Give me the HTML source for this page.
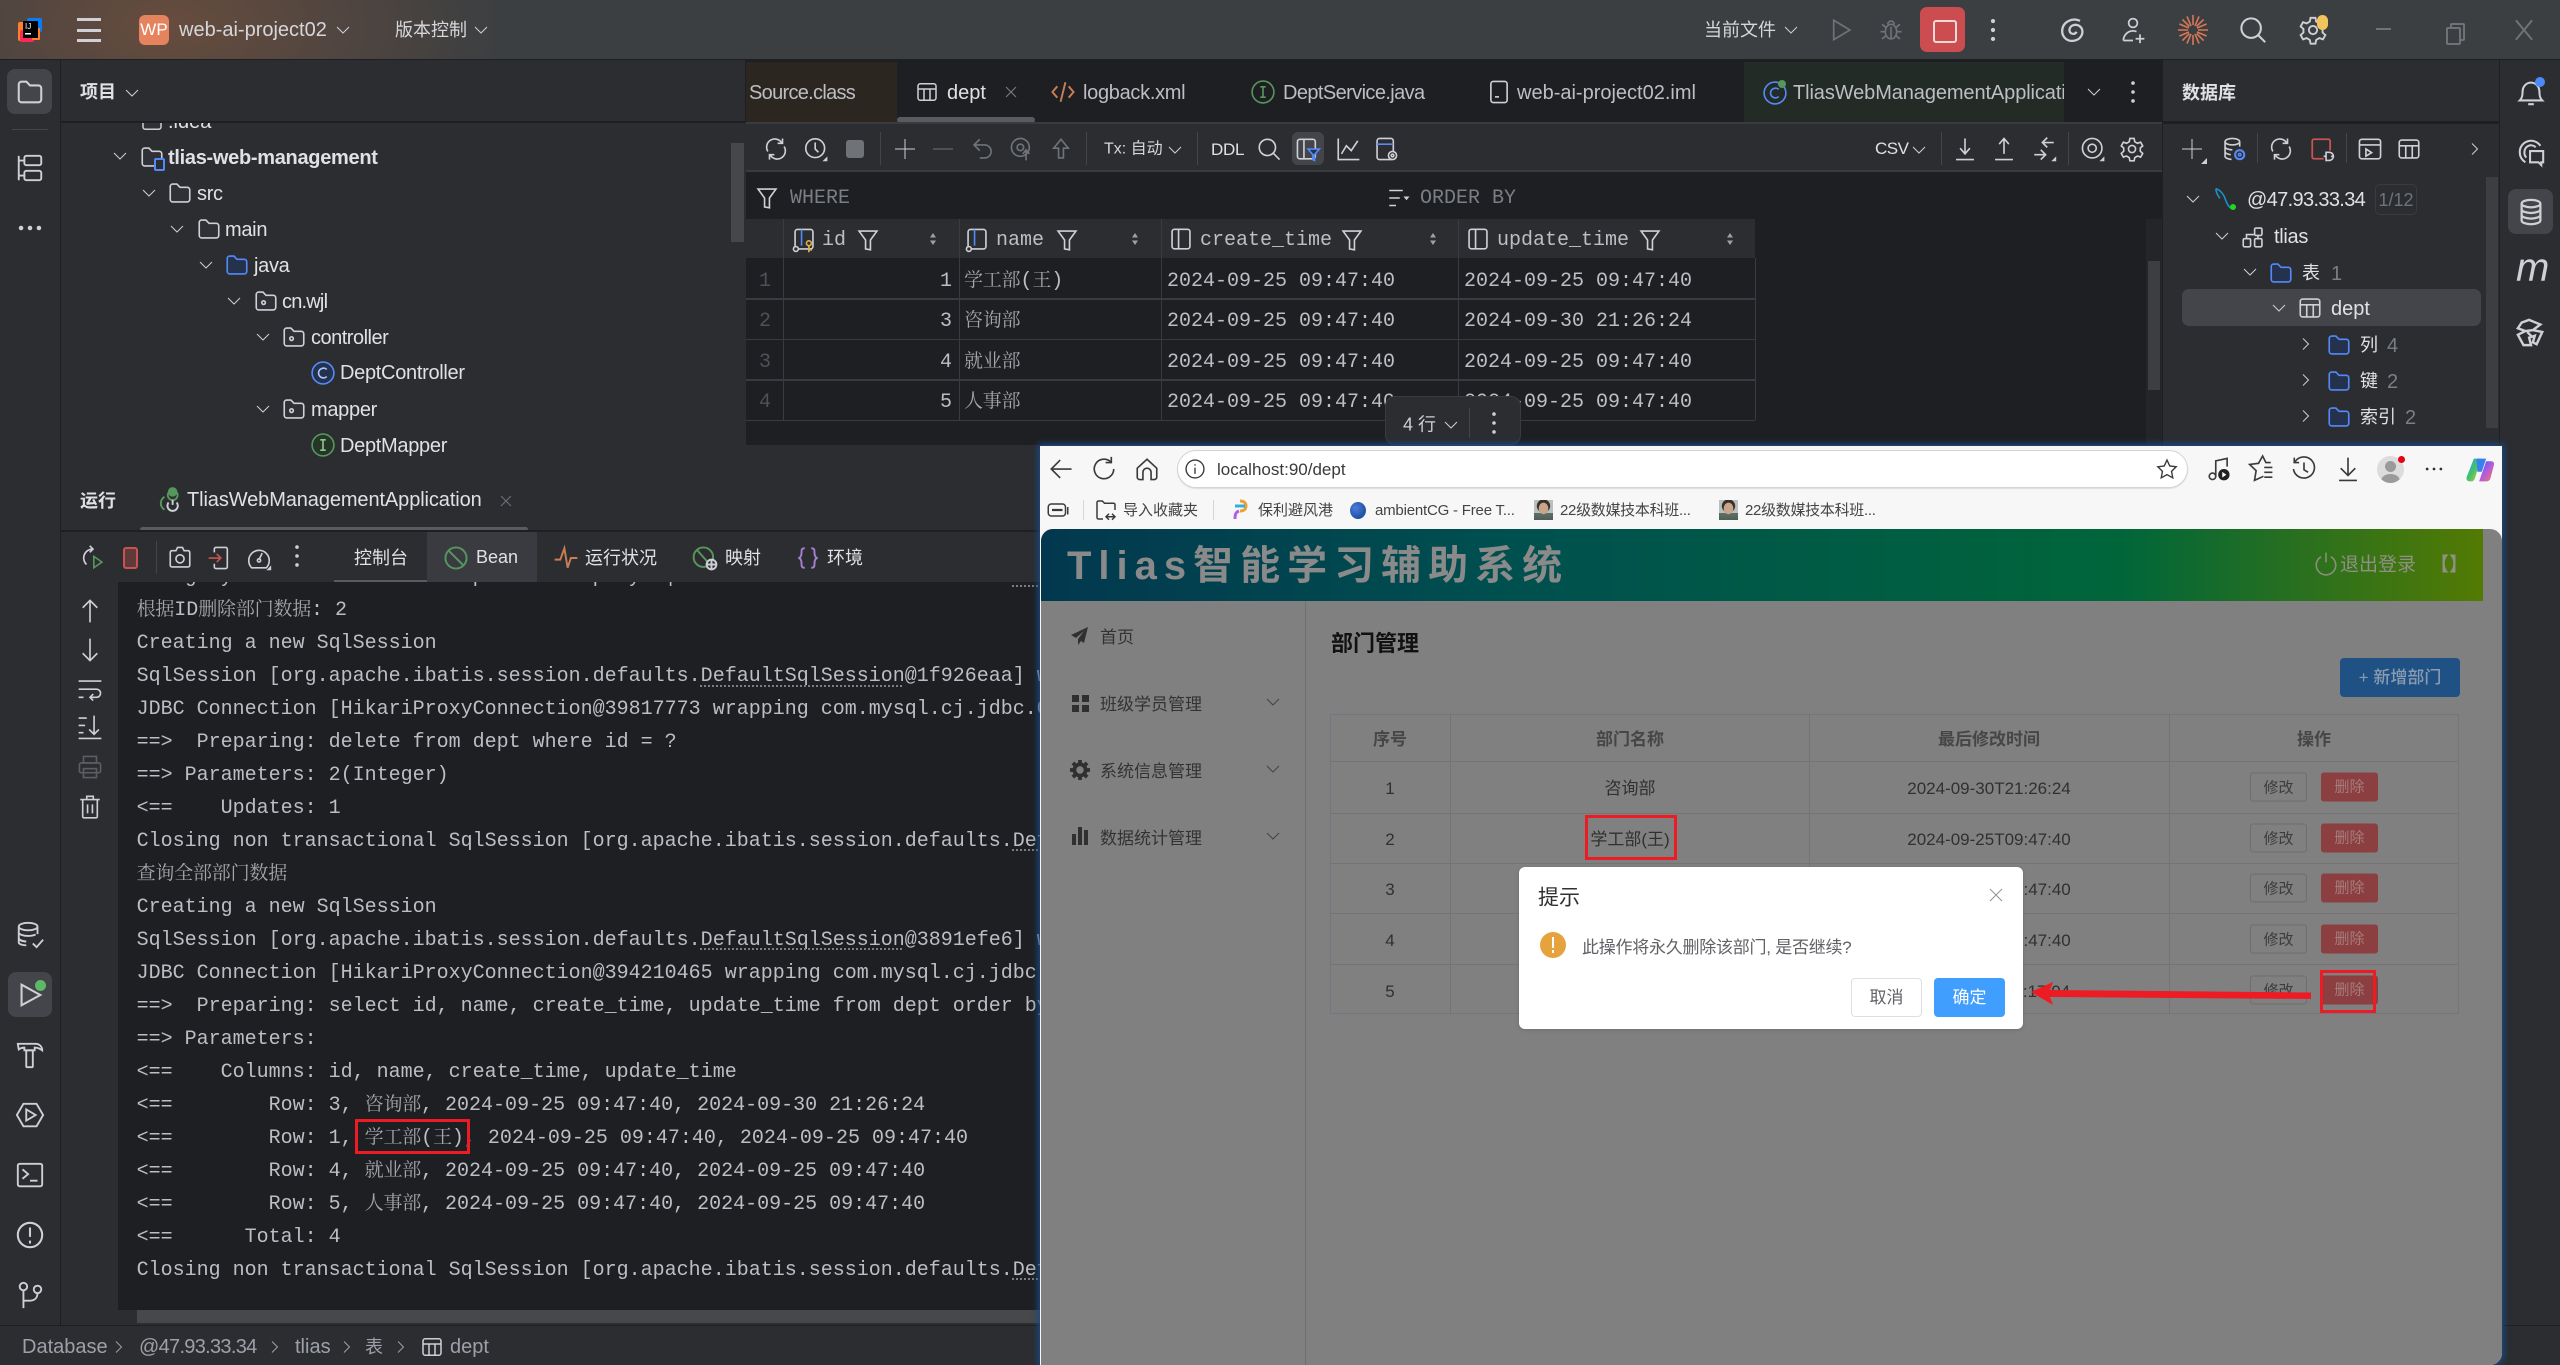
<!DOCTYPE html>
<html lang="zh"><head><meta charset="utf-8"><title>web-ai-project02</title>
<style>
html,body{margin:0;padding:0}
body{width:2560px;height:1365px;overflow:hidden;background:#2b2d30;font-family:"Liberation Sans","Noto Sans CJK SC",sans-serif;position:relative}
.a{position:absolute}
.t{position:absolute;white-space:nowrap;line-height:1.2;transform:translateY(-50%);font-size:20px;color:#dfe1e5}
.z{font-size:18px;font-family:"Noto Sans CJK SC","Liberation Sans",sans-serif}
.b{font-weight:700}
.g{color:#7a7e85}
.q{letter-spacing:-.3px}
.m{font-family:"Liberation Mono","Noto Serif CJK SC",monospace}
.ct{transform:translate(-50%,-50%)}
svg.i{position:absolute;width:26px;height:26px;transform:translate(-50%,-50%);fill:none;stroke:#ced0d6;stroke-width:1;overflow:visible}
svg.s{width:16px;height:16px}
svg.fg{fill:#2f3136}
svg.fb{fill:#25324d;stroke:#548af7}
svg.d{stroke:#6f737a}
svg.k{stroke:#3a3a3a}
.l{height:33px;line-height:33px;white-space:pre;font:20px/33px "Liberation Mono","Noto Serif CJK SC",monospace;color:#bcbec4}
.c{font-family:"Noto Serif CJK SC",serif;font-size:19px;letter-spacing:-.2px;color:#a4a6ab;line-height:0}
.dot{position:absolute;border-top:2px dotted #7a7e85;height:0}
.hd{font:20px/24px "Liberation Mono",monospace;color:#bcbec4;margin-top:1.500px}
.n{font:20px/24px "Liberation Mono",monospace;color:#4e5157;margin-top:1.500px}
.d1{font:20px/24px "Liberation Mono",monospace;color:#bcbec4;margin-top:1.500px}
.cj{font-family:"Noto Serif CJK SC",serif;font-size:19px;letter-spacing:-.2px;color:#a4a6ab;line-height:0}
.vl{position:absolute;width:1px;background:#393b40}
.hl{position:absolute;background:#393b40}
.w{font-size:17px;color:#303030;margin-top:1.500px}
.wh{font-size:17px;color:#464646;font-weight:700;margin-top:1.500px}
.bt1{position:absolute;left:2250px;width:57px;height:29px;box-sizing:border-box;border:1px solid #6e6e6e;border-radius:3px;color:#3c3c3c;font-size:15px;line-height:29px;text-align:center;transform:translateY(-50%)}
.bt2{position:absolute;left:2321px;width:57px;height:29px;border-radius:3px;background:#8b3f40;color:#a57d7d;font-size:15px;line-height:30px;text-align:center;transform:translateY(-50%)}
.rb{position:absolute;box-sizing:border-box;border:3px solid #ed1c24}
.h{position:absolute;width:1px;height:36px;background:#43454a;transform:translateY(-50%)}
.ava{position:absolute;width:19px;height:20px;background:radial-gradient(ellipse 5px 6px at 50% 42%,#c9a58a 0,#c9a58a 90%,transparent 100%),radial-gradient(ellipse 7px 7px at 50% 30%,#3a3029 0,#3a3029 90%,transparent 100%),linear-gradient(180deg,#b9c0c0 0,#b9c0c0 65%,#5d6f66 66%,#4f5f58 100%)}
</style></head><body>
<svg width="0" height="0" style="position:absolute">
<symbol id="cd" viewBox="0 0 16 16"><path d="M2 5l6 6 6-6"/></symbol>
<symbol id="cr" viewBox="0 0 16 16"><path d="M5 2.500L10.500 8 5 13.500"/></symbol>
<symbol id="fo" viewBox="0 0 16 16"><path d="M2 4a1.500 1.500 0 0 1 1.500-1.500h2.600L8 4.500h4.500A1.500 1.500 0 0 1 14 6v6a1.500 1.500 0 0 1-1.500 1.500h-9A1.500 1.500 0 0 1 2 12z"/></symbol>
<symbol id="pk" viewBox="0 0 16 16"><path d="M2 4a1.500 1.500 0 0 1 1.500-1.500h2.600L8 4.500h4.500A1.500 1.500 0 0 1 14 6v6a1.500 1.500 0 0 1-1.500 1.500h-9A1.500 1.500 0 0 1 2 12z"/><circle cx="6.500" cy="9" r="1.100"/></symbol>
<symbol id="col" viewBox="0 0 16 16"><rect x="2.500" y="2" width="11" height="12" rx="1.500"/><path d="M6.500 2v12"/></symbol>
<symbol id="tb" viewBox="0 0 16 16"><rect x="2" y="2.500" width="12" height="11" rx="1.500"/><path d="M2 6h12M6 6v7.500M10 6v7.500"/></symbol>
<symbol id="fl" viewBox="0 0 16 16"><path d="M2.500 2.500h11L9.500 8v6l-3-.5V8z"/></symbol>
<symbol id="so" viewBox="0 0 16 16"><path d="M8 2l3 4.500H5zM8 14l3-4.500H5z" fill="#9da0a8" stroke="none"/></symbol>
<symbol id="ref" viewBox="0 0 16 16"><path d="M3 9.500A5 5 0 0 1 11.500 4.200M13 6.500A5 5 0 0 1 4.500 11.800M12 1.500v3H9M4 14.500v-3h3"/></symbol>
<symbol id="gear" viewBox="0 0 16 16"><path d="M6.700 1.500h2.600l.4 2 1.700 1 1.900-.7 1.300 2.300-1.500 1.300v2l1.500 1.300-1.300 2.300-1.900-.7-1.700 1-.4 2H6.700l-.4-2-1.700-1-1.900.7-1.300-2.300 1.500-1.300v-2L1.400 6.100l1.300-2.300 1.900.7 1.700-1z"/><circle cx="8" cy="8" r="2.200"/></symbol>
<symbol id="db" viewBox="0 0 16 16"><ellipse cx="8" cy="3.500" rx="5" ry="2"/><path d="M3 3.500v9c0 1.100 2.200 2 5 2s5-.9 5-2v-9M3 6.500c0 1.100 2.200 2 5 2s5-.9 5-2M3 9.500c0 1.100 2.200 2 5 2s5-.9 5-2"/></symbol>
</svg>

<!-- title bar -->
<div class="a" style="left:0;top:0;width:2560px;height:60px;background:radial-gradient(ellipse 330px 170px at 170px 25px,#674c3e 0,rgba(103,76,62,.55) 45%,rgba(103,76,62,0) 100%),#3c3f41;border-bottom:1px solid #1e1f22;box-sizing:border-box"></div>
<svg class="a" style="left:18px;top:18px;width:24px;height:24px" viewBox="0 0 24 24"><rect x="9" y="0" width="15" height="14" rx="2" fill="#087cfa"/><rect x="0" y="4" width="10" height="19" rx="2" fill="#fe7f2d"/><rect x="2" y="12" width="14" height="12" rx="2" fill="#fe2857"/><rect x="14" y="10" width="8" height="12" rx="1" fill="#fe7f2d"/><rect x="5" y="3" width="15" height="17" fill="#000"/><text x="7" y="11" font-size="8" fill="#fff" font-family="Liberation Sans">IJ</text><rect x="7" y="15" width="6" height="1.500" fill="#fff"/></svg>
<div class="a" style="left:77px;top:18px;width:24px;height:3px;background:#cfd1d6"></div><div class="a" style="left:77px;top:29px;width:24px;height:3px;background:#cfd1d6"></div><div class="a" style="left:77px;top:39px;width:24px;height:3px;background:#cfd1d6"></div>
<div class="a" style="left:139px;top:15px;width:30px;height:30px;background:#e5835f;border-radius:6px;color:#fff;font-size:17px;line-height:30px;text-align:center">WP</div>
<div class="t" style="left:179px;top:30px;color:#d5d7dc">web-ai-project02</div>
<svg class="i s" style="left:343px;top:30px"><use href="#cd"/></svg>
<div class="t z" style="left:395px;top:30px;color:#d5d7dc">版本控制</div>
<svg class="i s" style="left:481px;top:30px"><use href="#cd"/></svg>
<div class="t z" style="left:1704px;top:30px;color:#d5d7dc">当前文件</div>
<svg class="i s" style="left:1791px;top:30px"><use href="#cd"/></svg>
<svg class="i d" style="left:1841px;top:30px" viewBox="0 0 16 16"><path d="M3.500 2l10 6-10 6z"/></svg>
<svg class="i d" style="left:1891px;top:30px" viewBox="0 0 16 16"><ellipse cx="8" cy="9" rx="3.500" ry="4.500"/><path d="M6 4.500a2 2 0 0 1 4 0M1.500 9h3M11.500 9h3M2.500 4.500l2.500 2M13.500 4.500L11 6.500M2.500 13.500l2.500-2M13.500 13.500L11 11.500M8 6v7"/></svg>
<div class="a" style="left:1920px;top:7px;width:45px;height:45px;background:#cc4d4f;border-radius:7px"></div>
<div class="a" style="left:1933px;top:20px;width:20px;height:19px;border:2px solid #f3d8d8;border-radius:3px"></div>
<svg class="i" style="left:1993px;top:30px" viewBox="0 0 16 16"><g fill="#ced0d6" stroke="none"><circle cx="8" cy="2.500" r="1.300"/><circle cx="8" cy="8" r="1.300"/><circle cx="8" cy="13.500" r="1.300"/></g></svg>
<svg class="i" style="left:2073px;top:30px;width:28px;height:28px;stroke-width:1.300" viewBox="0 0 16 16"><path d="M12 2.800C8 .8 2 3 1.800 8.500c0 3.800 3 6 6.200 5.700 3.800-.3 5.800-3.300 5.300-6-.5-2.500-3-3.700-5.300-2.900-2 .7-2.600 3-1.400 4.300 1 1 2.800.8 3.400-.6"/></svg>
<svg class="i" style="left:2133px;top:30px;width:28px;height:28px" viewBox="0 0 16 16"><circle cx="8" cy="4" r="2.500"/><path d="M2.500 14c0-3 2.500-5.500 5.500-5.500 1 0 1.500.2 2 .4M2.500 14H8M12 10.500v5M9.500 13h5"/></svg>
<svg class="i" style="left:2193px;top:30px;width:32px;height:32px;stroke:#d97757;stroke-width:.8" viewBox="0 0 16 16"><path d="M8 .5v5M8 10.500v5M.5 8h5M10.500 8h5M2.700 2.700l3.500 3.500M9.800 9.800l3.500 3.500M13.300 2.700L9.800 6.200M6.200 9.800l-3.500 3.500M5 1.200l2 4.800M9 10l2 4.800M11 1.200L9 6M7 10l-2 4.800M1.200 5L6 7M10 9l4.800 2M14.800 5L10 7M6 9l-4.800 2"/></svg>
<svg class="i" style="left:2253px;top:30px;width:30px;height:30px;stroke-width:1.100" viewBox="0 0 16 16"><circle cx="7" cy="7" r="5.200"/><path d="M10.800 10.800L14.500 14.500"/></svg>
<svg class="i" style="left:2313px;top:30px;width:30px;height:30px"><use href="#gear"/></svg>
<div class="a" style="left:2317px;top:15px;width:11px;height:15px;border-radius:6px;background:#f2c55c"></div>
<div class="a" style="left:2376px;top:28px;width:15px;height:2px;background:#6f7277"></div>
<div class="a" style="left:2450px;top:23px;width:11px;height:14px;border:2px solid #6f7277;border-radius:2px"></div>
<div class="a" style="left:2446px;top:27px;width:11px;height:14px;border:2px solid #6f7277;border-radius:2px;background:#3c3f41"></div>
<svg class="i" style="left:2524px;top:30px;stroke:#6f7277;stroke-width:1.200" viewBox="0 0 16 16"><path d="M3 2l10 12M13 2L3 14"/></svg>

<!-- left stripe -->
<div class="a" style="left:0;top:60px;width:61px;height:1266px;background:#2b2d30;border-right:1px solid #1e1f22;box-sizing:border-box"></div>
<div class="a" style="left:7px;top:69px;width:45px;height:45px;background:#43454a;border-radius:8px"></div>
<svg class="i" style="left:30px;top:92px;width:30px;height:30px;stroke-width:1.100"><use href="#fo"/></svg>
<div class="a" style="left:12px;top:129px;width:36px;height:1px;background:#43454a"></div>
<svg class="i" style="left:30px;top:168px;width:30px;height:30px" viewBox="0 0 16 16"><path d="M2 1.500v13M2 4h3M2 12h3"/><rect x="5" y="1.500" width="9" height="5" rx="1"/><rect x="5" y="9.500" width="9" height="5" rx="1"/></svg>
<svg class="i" style="left:30px;top:228px" viewBox="0 0 16 16"><g fill="#ced0d6" stroke="none"><circle cx="2.500" cy="8" r="1.400"/><circle cx="8" cy="8" r="1.400"/><circle cx="13.500" cy="8" r="1.400"/></g></svg>
<svg class="i" style="left:30px;top:935px;width:30px;height:30px" viewBox="0 0 16 16"><ellipse cx="7" cy="3.500" rx="5" ry="2"/><path d="M2 3.500v8.500c0 .8 2 1.500 4 1.500M12 3.500v4M2 6.500c0 1.100 2.200 2 5 2 1.500 0 3-.3 4-.8M2 9.500c0 1 1.500 1.800 4 2M9.500 12.500l2 2 3.500-4"/></svg>
<div class="a" style="left:8px;top:972px;width:44px;height:45px;background:#43454a;border-radius:8px"></div>
<svg class="i" style="left:30px;top:995px;width:30px;height:30px;stroke-width:1.100" viewBox="0 0 16 16"><path d="M3.500 2.500l10 5.500-10 5.500z"/></svg>
<div class="a" style="left:35px;top:980px;width:11px;height:11px;border-radius:50%;background:#5fb865"></div>
<svg class="i" style="left:30px;top:1055px;width:30px;height:30px" viewBox="0 0 16 16"><path d="M1.500 2h9.500c2 0 3.500 1.500 3.500 3.500-1.500-1.200-3-1.500-4-1.500v1.500H5V4c-1 0-2 .3-3 1z"/><rect x="6" y="5.500" width="3.500" height="9" rx=".5"/></svg>
<svg class="i" style="left:30px;top:1115px;width:30px;height:30px" viewBox="0 0 16 16"><path d="M1 8l3.500-6h7L15 8l-3.500 6h-7z"/><path d="M6 5l5 3-5 3z"/></svg>
<svg class="i" style="left:30px;top:1175px;width:30px;height:30px" viewBox="0 0 16 16"><rect x="1.500" y="2" width="13" height="12" rx="1"/><path d="M4 5l3 2.500L4 10M8 11h4"/></svg>
<svg class="i" style="left:30px;top:1235px;width:30px;height:30px;stroke-width:1.100" viewBox="0 0 16 16"><circle cx="8" cy="8" r="6.500"/><path d="M8 4v5M8 11v1.500"/></svg>
<svg class="i" style="left:30px;top:1295px;width:30px;height:30px" viewBox="0 0 16 16"><circle cx="4.500" cy="3.500" r="2"/><circle cx="12" cy="5" r="2"/><path d="M4.500 5.500V15M4.500 11H8c2.500 0 4-1.500 4-4"/></svg>

<!-- project panel -->
<div class="a" style="left:61px;top:60px;width:684px;height:408px;background:#2b2d30"></div>
<div class="a" style="left:61px;top:121px;width:684px;height:2px;background:#1e1f22"></div>
<div class="t z b" style="left:80px;top:92px">项目</div>
<svg class="i s" style="left:132px;top:93px"><use href="#cd"/></svg>
<div class="a" style="left:61px;top:123px;width:684px;height:345px;overflow:hidden">
<div class="t" style="left:107px;top:-1px">.idea</div>
<svg class="i fg" style="left:91px;top:-2px;width:24px;height:24px"><use href="#fo"/></svg>
</div>
<svg class="i s" style="left:120px;top:156px"><use href="#cd"/></svg>
<svg class="i fg" style="left:152px;top:157px"><use href="#fo"/></svg>
<div class="a" style="left:154px;top:158px;width:7px;height:9px;border:2px solid #548af7;border-radius:2px;background:#2b2d30"></div>
<div class="t b q" style="left:168px;top:158px">tlias-web-management</div>
<svg class="i s" style="left:149px;top:193px"><use href="#cd"/></svg>
<svg class="i fg" style="left:180px;top:193px"><use href="#fo"/></svg>
<div class="t q" style="left:197px;top:194px">src</div>
<svg class="i s" style="left:177px;top:229px"><use href="#cd"/></svg>
<svg class="i fg" style="left:209px;top:229px"><use href="#fo"/></svg>
<div class="t q" style="left:225px;top:230px">main</div>
<svg class="i s" style="left:206px;top:265px"><use href="#cd"/></svg>
<svg class="i fb" style="left:237px;top:265px"><use href="#fo"/></svg>
<div class="t q" style="left:254px;top:266px">java</div>
<svg class="i s" style="left:234px;top:301px"><use href="#cd"/></svg>
<svg class="i fg" style="left:266px;top:301px"><use href="#pk"/></svg>
<div class="t" style="left:282px;top:302px;letter-spacing:-.8px">cn.wjl</div>
<svg class="i s" style="left:263px;top:337px"><use href="#cd"/></svg>
<svg class="i fg" style="left:294px;top:337px"><use href="#pk"/></svg>
<div class="t" style="left:311px;top:338px;letter-spacing:-.5px">controller</div>
<svg class="i" style="left:323px;top:373px;stroke:#548af7;fill:#25324d" viewBox="0 0 16 16"><circle cx="8" cy="8" r="6.700"/><path d="M10.300 5.800a3 3 0 1 0 0 4.400" stroke="#a8c4fa" fill="none"/></svg>
<div class="t q" style="left:340px;top:373px">DeptController</div>
<svg class="i s" style="left:263px;top:409px"><use href="#cd"/></svg>
<svg class="i fg" style="left:294px;top:409px"><use href="#pk"/></svg>
<div class="t q" style="left:311px;top:410px">mapper</div>
<svg class="i" style="left:323px;top:445px;stroke:#57965c;fill:#253627" viewBox="0 0 16 16"><circle cx="8" cy="8" r="6.700"/><path d="M6.300 4.800h3.400M8 4.800v6.400M6.300 11.200h3.400" stroke="#8ec593" fill="none"/></svg>
<div class="t q" style="left:340px;top:446px">DeptMapper</div>
<div class="a" style="left:731px;top:143px;width:13px;height:99px;background:#45474b"></div>
<div class="a" style="left:61px;top:468px;width:684px;height:1px;background:#1e1f22"></div>

<!-- editor -->
<div class="a" style="left:745px;top:60px;width:1417px;height:62px;background:#1e1f22;border-left:1px solid #1e1f22;box-sizing:border-box"></div>
<div class="a" style="left:746px;top:62px;width:151px;height:60px;background:#2c2620;overflow:hidden"><div class="t" style="left:3px;top:31px;color:#bcbec4;letter-spacing:-.7px">Source.class</div></div>
<svg class="i" style="left:927px;top:92px;width:24px;height:24px"><use href="#tb"/></svg>
<div class="t" style="left:947px;top:93px">dept</div>
<svg class="i s" style="left:1011px;top:92px;stroke:#7a7e85" viewBox="0 0 16 16"><path d="M3 3l10 10M13 3L3 13"/></svg>
<div class="a" style="left:897px;top:117px;width:138px;height:6px;background:#595b61;border-radius:3px"></div>
<svg class="i" style="left:1063px;top:92px;stroke:#c77d55;stroke-width:1.200" viewBox="0 0 16 16"><path d="M4.500 4.500L1.500 8l3 3.500M11.500 4.500l3 3.500-3 3.500" /><path d="M9.500 2l-3 12"/></svg>
<div class="t" style="left:1083px;top:93px;color:#bcbec4;letter-spacing:-.3px">logback.xml</div>
<svg class="i" style="left:1263px;top:92px;stroke:#57965c" viewBox="0 0 16 16"><circle cx="8" cy="8" r="6.700"/><path d="M6.300 4.800h3.400M8 4.800v6.400M6.300 11.200h3.400"/></svg>
<div class="t" style="left:1283px;top:93px;color:#bcbec4;letter-spacing:-.6px">DeptService.java</div>
<svg class="i" style="left:1499px;top:92px" viewBox="0 0 16 16"><rect x="3" y="1.500" width="10" height="13" rx="1.500"/><path d="M5.500 11h2.500"/></svg>
<div class="t" style="left:1517px;top:93px;color:#bcbec4">web-ai-project02.iml</div>
<div class="a" style="left:1744px;top:62px;width:320px;height:60px;background:#222b26;overflow:hidden"><div class="t" style="left:49px;top:31px;color:#bcbec4;letter-spacing:-.1px">TliasWebManagementApplication</div></div>
<svg class="i" style="left:1775px;top:93px;stroke:#548af7" viewBox="0 0 16 16"><circle cx="8" cy="8" r="6.700"/><path d="M10.300 5.800a3 3 0 1 0 0 4.400"/></svg>
<div class="a" style="left:1778px;top:80px;width:8px;height:8px;border-radius:50%;background:#57965c"></div>
<svg class="i s" style="left:2094px;top:92px"><use href="#cd"/></svg>
<svg class="i" style="left:2133px;top:92px" viewBox="0 0 16 16"><g fill="#ced0d6" stroke="none"><circle cx="8" cy="2.500" r="1.100"/><circle cx="8" cy="8" r="1.100"/><circle cx="8" cy="13.500" r="1.100"/></g></svg>

<div class="a" style="left:746px;top:122px;width:1416px;height:50px;background:#2b2d30;border-top:2px solid #393b40;border-bottom:2px solid #393b40;box-sizing:border-box"></div>
<svg class="i" style="left:776px;top:149px"><use href="#ref"/></svg>
<svg class="i" style="left:816px;top:149px" viewBox="0 0 16 16"><circle cx="7.500" cy="7.500" r="5.800"/><path d="M7.500 4v4l2 2"/><path d="M15 12.500v3h-3z" fill="#ced0d6" stroke="none"/></svg>
<div class="a" style="left:846px;top:140px;width:18px;height:18px;border-radius:3px;background:#6f7277"></div>
<div class="vl" style="left:880px;top:132px;height:33px;background:#43454a"></div>
<svg class="i" style="left:905px;top:149px"><path d="M13 3v20M3 13h20"/></svg>
<svg class="i d" style="left:943px;top:149px"><path d="M3 13h20"/></svg>
<svg class="i d" style="left:983px;top:149px" viewBox="0 0 16 16"><path d="M6 2L2.500 5.500 6 9M2.500 5.500H9a4 4 0 0 1 0 8H6"/></svg>
<svg class="i d" style="left:1022px;top:149px" viewBox="0 0 16 16"><circle cx="7" cy="7" r="5.500"/><circle cx="7" cy="7" r="2"/><path d="M10.500 15V9M8.500 11l2-2.500 2 2.500"/></svg>
<svg class="i d" style="left:1061px;top:149px" viewBox="0 0 16 16"><path d="M8 2L3.500 7.500H6.500v6h3v-6h3z"/></svg>
<div class="vl" style="left:1086px;top:132px;height:33px;background:#43454a"></div>
<div class="t" style="left:1104px;top:149px;font-size:16px;color:#d5d7dc">Tx: <span style="font-size:16px">自动</span></div>
<svg class="i s" style="left:1175px;top:150px"><use href="#cd"/></svg>
<div class="vl" style="left:1197px;top:132px;height:33px;background:#43454a"></div>
<div class="t" style="left:1211px;top:150px;font-size:17px;letter-spacing:-.3px">DDL</div>
<svg class="i" style="left:1269px;top:149px" viewBox="0 0 16 16"><circle cx="7" cy="7" r="5"/><path d="M10.500 10.500l4 4"/></svg>
<div class="a" style="left:1292px;top:132px;width:32px;height:33px;background:#43454a;border-radius:6px"></div>
<svg class="i" style="left:1308px;top:149px" viewBox="0 0 16 16"><rect x="1.500" y="2" width="11" height="12" rx="1.500"/><path d="M5.500 2v12"/><path d="M8 8h7l-3 3.500V15l-1-.5v-3z" fill="#25324d" stroke="#548af7"/></svg>
<svg class="i" style="left:1348px;top:149px" viewBox="0 0 16 16"><path d="M2 1.500V14.500H15M4 11l3-5 3 3 4-6"/></svg>
<svg class="i" style="left:1386px;top:149px" viewBox="0 0 16 16"><rect x="2.500" y="1.500" width="10" height="13" rx="1.500"/><path d="M2.500 5h10" stroke="#548af7"/><circle cx="12" cy="12" r="2.500" fill="#2b2d30"/><circle cx="12" cy="12" r=".8"/></svg>
<div class="t" style="left:1875px;top:149px;font-size:17px;letter-spacing:-.5px">CSV</div>
<svg class="i s" style="left:1919px;top:150px"><use href="#cd"/></svg>
<div class="vl" style="left:1941px;top:132px;height:33px;background:#43454a"></div>
<svg class="i" style="left:1965px;top:149px" viewBox="0 0 16 16"><path d="M8 1.500v9M5 7.500l3 3.500 3-3.500M2.500 14.500h11"/></svg>
<svg class="i" style="left:2004px;top:149px" viewBox="0 0 16 16"><path d="M8 11V2M5 5l3-3.500L11 5M2.500 14.500h11"/></svg>
<svg class="i" style="left:2044px;top:149px" viewBox="0 0 16 16"><path d="M14 4H7M10 1L7 4l3 3M2 11.500h7M6 8.500l3 3-3 3"/><path d="M15.500 12.500v3h-3z" fill="#ced0d6" stroke="none"/></svg>
<div class="vl" style="left:2068px;top:132px;height:33px;background:#43454a"></div>
<svg class="i" style="left:2093px;top:149px" viewBox="0 0 16 16"><circle cx="7.500" cy="7.500" r="6"/><circle cx="7.500" cy="7.500" r="2.500"/><path d="M15 12.500v3h-3z" fill="#ced0d6" stroke="none"/></svg>
<svg class="i" style="left:2132px;top:149px"><use href="#gear"/></svg>

<div class="a" style="left:746px;top:172px;width:1416px;height:273px;background:#1e1f22"></div>
<svg class="i d" style="left:767px;top:198px;stroke:#ced0d6"><use href="#fl"/></svg>
<div class="t m g" style="left:790px;top:199px">WHERE</div>
<svg class="i" style="left:1399px;top:198px;width:24px;height:24px" viewBox="0 0 16 16"><path d="M1.500 3h9M1.500 8h7M1.500 13h4.500"/><path d="M11 7h4l-2 2.500z" fill="#ced0d6" stroke="none"/></svg>
<div class="t m g" style="left:1420px;top:199px">ORDER BY</div>

<div class="a" style="left:746px;top:219px;width:1009px;height:39px;background:#2b2d30"></div>
<div class="hl" style="left:746px;top:298px;width:1009px;height:2px"></div>
<div class="hl" style="left:746px;top:339px;width:1009px;height:1px"></div>
<div class="hl" style="left:746px;top:379px;width:1009px;height:2px"></div>
<div class="hl" style="left:746px;top:420px;width:1009px;height:1px"></div>
<div class="vl" style="left:783px;top:219px;height:201px;background:#393b40"></div>
<div class="vl" style="left:959px;top:219px;height:201px;background:#393b40"></div>
<div class="vl" style="left:1161px;top:219px;height:201px;background:#393b40"></div>
<div class="vl" style="left:1458px;top:219px;height:201px;background:#393b40"></div>
<div class="vl" style="left:1755px;top:258px;height:162px;background:#393b40"></div>

<svg class="i" style="left:804px;top:240px" viewBox="0 0 16 16"><rect x="2.500" y="1.500" width="11" height="12" rx="1.500"/><path d="M6.500 1.500v10" stroke="#548af7"/><circle cx="3" cy="13.500" r="1.500" fill="#2b2d30"/><circle cx="11" cy="10" r="1.500" fill="#2b2d30" stroke="#e0b24c"/><path d="M11 11.500v4M11 14h2" stroke="#e0b24c"/></svg>
<div class="t hd" style="left:822px;top:239px">id</div>
<svg class="i" style="left:868px;top:240px"><use href="#fl"/></svg>
<svg class="i s" style="left:933px;top:239px"><use href="#so"/></svg>
<svg class="i" style="left:977px;top:240px" viewBox="0 0 16 16"><rect x="2.500" y="1.500" width="11" height="12" rx="1.500"/><path d="M6.500 1.500v10" stroke="#548af7"/><circle cx="3" cy="13.500" r="1.500" fill="#2b2d30"/></svg>
<div class="t hd" style="left:996px;top:239px">name</div>
<svg class="i" style="left:1067px;top:240px"><use href="#fl"/></svg>
<svg class="i s" style="left:1135px;top:239px"><use href="#so"/></svg>
<svg class="i" style="left:1181px;top:239px"><use href="#col"/></svg>
<div class="t hd" style="left:1200px;top:239px">create_time</div>
<svg class="i" style="left:1352px;top:240px"><use href="#fl"/></svg>
<svg class="i s" style="left:1433px;top:239px"><use href="#so"/></svg>
<svg class="i" style="left:1478px;top:239px"><use href="#col"/></svg>
<div class="t hd" style="left:1497px;top:239px">update_time</div>
<svg class="i" style="left:1650px;top:240px"><use href="#fl"/></svg>
<svg class="i s" style="left:1730px;top:239px"><use href="#so"/></svg>

<div class="t n" style="left:759px;top:280px">1</div><div class="t d1" style="left:940px;top:280px">1</div><div class="t d1" style="left:964px;top:280px"><span class="cj">学工部</span>(<span class="cj">王</span>)</div><div class="t d1" style="left:1167px;top:280px">2024-09-25 09:47:40</div><div class="t d1" style="left:1464px;top:280px">2024-09-25 09:47:40</div>
<div class="t n" style="left:759px;top:320px">2</div><div class="t d1" style="left:940px;top:320px">3</div><div class="t d1" style="left:964px;top:320px"><span class="cj">咨询部</span></div><div class="t d1" style="left:1167px;top:320px">2024-09-25 09:47:40</div><div class="t d1" style="left:1464px;top:320px">2024-09-30 21:26:24</div>
<div class="t n" style="left:759px;top:361px">3</div><div class="t d1" style="left:940px;top:361px">4</div><div class="t d1" style="left:964px;top:361px"><span class="cj">就业部</span></div><div class="t d1" style="left:1167px;top:361px">2024-09-25 09:47:40</div><div class="t d1" style="left:1464px;top:361px">2024-09-25 09:47:40</div>
<div class="t n" style="left:759px;top:401px">4</div><div class="t d1" style="left:940px;top:401px">5</div><div class="t d1" style="left:964px;top:401px"><span class="cj">人事部</span></div><div class="t d1" style="left:1167px;top:401px">2024-09-25 09:47:40</div><div class="t d1" style="left:1464px;top:401px">2024-09-25 09:47:40</div>

<div class="a" style="left:2146px;top:219px;width:16px;height:226px;background:#232528"></div>
<div class="a" style="left:2148px;top:261px;width:12px;height:129px;background:#3c3e41"></div>

<div class="a" style="left:1385px;top:396px;width:136px;height:49px;box-sizing:border-box;background:#2b2d30;border:1px solid #393b40;border-radius:10px"></div>
<div class="t" style="left:1403px;top:425px;font-size:18px;color:#ced0d6">4 <span class="z">行</span></div>
<svg class="i s" style="left:1451px;top:425px"><use href="#cd"/></svg>
<div class="vl" style="left:1469px;top:408px;height:30px;background:#43454a"></div>
<svg class="i" style="left:1494px;top:423px" viewBox="0 0 16 16"><g fill="#ced0d6" stroke="none"><circle cx="8" cy="2.500" r="1.100"/><circle cx="8" cy="8" r="1.100"/><circle cx="8" cy="13.500" r="1.100"/></g></svg>

<!-- right db panel -->
<div class="a" style="left:2162px;top:60px;width:337px;height:400px;background:#2b2d30;border-left:1px solid #1e1f22;box-sizing:border-box"></div>
<div class="a" style="left:2162px;top:121px;width:337px;height:3px;background:#1e1f22"></div>
<div class="t z b" style="left:2182px;top:93px">数据库</div>
<svg class="i" style="left:2192px;top:149px"><path d="M13 3v20M3 13h20"/><path d="M28 22v6h-6z" fill="#ced0d6" stroke="none"/></svg>
<svg class="i" style="left:2234px;top:149px" viewBox="0 0 16 16"><ellipse cx="7" cy="3.500" rx="4.500" ry="2"/><path d="M2.500 3.500v9c0 1 2 1.800 4 1.900M11.500 3.500v3M2.500 6.500c0 1.100 2 2 4.500 2M2.500 9.500c0 1 1.500 1.800 3.500 2"/><circle cx="11.500" cy="11.500" r="2.800" stroke="#548af7" stroke-width="1.300"/><circle cx="11.500" cy="11.500" r=".8" stroke="#548af7"/></svg>
<div class="vl" style="left:2257px;top:133px;height:30px;background:#43454a"></div>
<svg class="i" style="left:2281px;top:149px"><use href="#ref"/></svg>
<svg class="i" style="left:2322px;top:149px" viewBox="0 0 16 16"><path d="M9 14H3a1 1 0 0 1-1-1V3a1 1 0 0 1 1-1h9a1 1 0 0 1 1 1v6" stroke="#c75450" stroke-width="1.100"/><path d="M15.500 12.500h-2M9 12.500h1.500M10.500 10h2a2.500 2.500 0 0 1 0 5h-2z"/></svg>
<div class="vl" style="left:2346px;top:133px;height:30px;background:#43454a"></div>
<svg class="i" style="left:2370px;top:149px" viewBox="0 0 16 16"><rect x="1.500" y="2" width="13" height="12" rx="1.500"/><path d="M1.500 5.500h13M5.500 8l3.500 2.200-3.500 2.200z"/></svg>
<svg class="i" style="left:2409px;top:149px"><use href="#tb"/></svg>
<svg class="i s" style="left:2475px;top:149px"><use href="#cr"/></svg>
<div class="a" style="left:2486px;top:177px;width:12px;height:251px;background:#3c3e41"></div>
<svg class="i s" style="left:2193px;top:199px"><use href="#cd"/></svg>
<svg class="i" style="left:2224px;top:200px;stroke:#1a90c8" viewBox="0 0 16 16"><path d="M3 1c3 1 5 4 6 7s2 4 3 5M3 1c0 2 1 4 2.500 6"/></svg>
<div class="a" style="left:2230px;top:204px;width:6px;height:6px;border-radius:50%;background:#1fd81f"></div>
<div class="t" style="left:2247px;top:200px;letter-spacing:-.65px">@47.93.33.34</div>
<div class="a" style="left:2375px;top:184px;width:42px;height:31px;box-sizing:border-box;border:1px solid #393b40;border-radius:5px;color:#6f737a;font-size:18px;line-height:31px;text-align:center">1/12</div>
<svg class="i s" style="left:2222px;top:236px"><use href="#cd"/></svg>
<svg class="i" style="left:2253px;top:237px" viewBox="0 0 16 16"><rect x="2" y="9" width="4.500" height="5" rx=".8"/><rect x="9" y="9" width="4.500" height="5" rx=".8"/><rect x="9" y="2.500" width="4.500" height="4.500" rx=".8"/><path d="M4 9V6.500h5M11 7v2"/></svg>
<div class="t q" style="left:2274px;top:237px">tlias</div>
<svg class="i s" style="left:2250px;top:272px"><use href="#cd"/></svg>
<svg class="i fb" style="left:2281px;top:273px"><use href="#fo"/></svg>
<div class="t z" style="left:2302px;top:273px">表</div><div class="t g" style="left:2331px;top:274px">1</div>
<div class="a" style="left:2182px;top:289px;width:299px;height:37px;background:#43454a;border-radius:7px"></div>
<svg class="i s" style="left:2279px;top:308px"><use href="#cd"/></svg>
<svg class="i" style="left:2310px;top:308px"><use href="#tb"/></svg>
<div class="t" style="left:2331px;top:309px">dept</div>
<svg class="i s" style="left:2306px;top:344px"><use href="#cr"/></svg>
<svg class="i fb" style="left:2339px;top:345px"><use href="#fo"/></svg>
<div class="t z" style="left:2360px;top:345px">列</div><div class="t g" style="left:2387px;top:346px">4</div>
<svg class="i s" style="left:2306px;top:380px"><use href="#cr"/></svg>
<svg class="i fb" style="left:2339px;top:381px"><use href="#fo"/></svg>
<div class="t z" style="left:2360px;top:381px">键</div><div class="t g" style="left:2387px;top:382px">2</div>
<svg class="i s" style="left:2306px;top:416px"><use href="#cr"/></svg>
<svg class="i fb" style="left:2339px;top:417px"><use href="#fo"/></svg>
<div class="t z" style="left:2360px;top:417px">索引</div><div class="t g" style="left:2405px;top:418px">2</div>

<!-- right stripe -->
<div class="a" style="left:2499px;top:60px;width:61px;height:1305px;background:#2b2d30;border-left:1px solid #1e1f22;box-sizing:border-box"></div>
<svg class="i" style="left:2531px;top:92px;width:30px;height:30px;stroke-width:1.100" viewBox="0 0 16 16"><path d="M2 12.500c1-1 1.500-2 1.500-4.500 0-3 2-5 4.500-5s4.500 2 4.500 5c0 2.500.5 3.500 1.500 4.500zM6.500 14.500h3"/></svg>
<div class="a" style="left:2535px;top:77px;width:10px;height:10px;border-radius:50%;background:#4b8af7"></div>
<svg class="i" style="left:2531px;top:152px;width:30px;height:30px;stroke-width:1.100" viewBox="0 0 16 16"><path d="M5 13.500A6.500 6.500 0 0 1 2 8a6 6 0 0 1 11-3.300M5.500 11A4 4 0 0 1 4.500 8a3.500 3.500 0 0 1 6-2.500"/><path d="M7.500 7.500h7v6h-1v1.500l-1.500-1.500H7.500z"/></svg>
<div class="a" style="left:2508px;top:189px;width:45px;height:45px;background:#43454a;border-radius:8px"></div>
<svg class="i" style="left:2531px;top:212px;width:30px;height:30px;stroke-width:1.200"><use href="#db"/></svg>
<div class="t" style="left:2516px;top:268px;font:italic 400 40px/40px 'Liberation Sans',sans-serif;color:#ced0d6">m</div>
<svg class="i" style="left:2531px;top:332px;width:30px;height:30px;stroke-width:1.300" viewBox="0 0 16 16"><path d="M7 1.500L13 4l-4 3 5 1-3 6.500-2-1 1-3.500-3 1 1 4L4 15 1 9.500l4-2-4-1.500L3 3zM9 7l-4 .5M8.500 10.500L6 8"/></svg>

<!-- run panel -->
<div class="a" style="left:61px;top:468px;width:2000px;height:62px;background:#2b2d30"></div>
<div class="t z b" style="left:80px;top:501px">运行</div>
<svg class="i" style="left:171px;top:500px;stroke:#57965c;stroke-width:1.200" viewBox="0 0 16 16"><path d="M4 14c-3-2-3-6 0-8M9 2a3 3 0 1 0 .1 0" /><circle cx="9" cy="3" r="2.300" fill="#57965c"/><path d="M9 8v3" stroke="#ced0d6"/><path d="M6.500 9.500a3.200 3.200 0 1 0 5 0" stroke="#ced0d6"/></svg>
<div class="t" style="left:187px;top:500px;color:#dfe1e5;letter-spacing:-.1px">TliasWebManagementApplication</div>
<svg class="i s" style="left:506px;top:501px;stroke:#6f737a" viewBox="0 0 16 16"><path d="M3 3l10 10M13 3L3 13"/></svg>
<div class="a" style="left:140px;top:527px;width:388px;height:5px;background:#595b61;border-radius:3px"></div>
<div class="a" style="left:61px;top:530px;width:980px;height:2px;background:#1e1f22"></div>
<div class="a" style="left:62px;top:532px;width:978px;height:50px;background:#2b2d30"></div>
<svg class="i" style="left:93px;top:558px" viewBox="0 0 16 16"><path d="M8 2.500A5.500 5.500 0 0 0 4 12M6 .5l2 2-2 2"/><path d="M8.500 7l5 3.500-5 3.500z" stroke="#57965c"/></svg>
<div class="a" style="left:123px;top:547px;width:15px;height:22px;box-sizing:border-box;background:#5f3a3a;border:2px solid #c75450;border-radius:3px"></div>
<div class="vl" style="left:156px;top:541px;height:33px;background:#43454a"></div>
<svg class="i" style="left:180px;top:558px" viewBox="0 0 16 16"><path d="M5.500 3.500l1-2h3l1 2H13a1 1 0 0 1 1 1v8a1 1 0 0 1-1 1H3a1 1 0 0 1-1-1v-8a1 1 0 0 1 1-1z"/><circle cx="8" cy="8.500" r="2.500"/></svg>
<svg class="i" style="left:220px;top:558px" viewBox="0 0 16 16"><path d="M4.500 4.500V2.500a1 1 0 0 1 1-1h6a1 1 0 0 1 1 1v11a1 1 0 0 1-1 1h-6a1 1 0 0 1-1-1v-2"/><path d="M6 5.500L8.500 8 6 10.500M1 8h7" stroke="#c75450"/></svg>
<svg class="i" style="left:259px;top:558px" viewBox="0 0 16 16"><path d="M3.500 14A6.300 6.300 0 1 1 12.500 14zM8 9l2-4"/><circle cx="8" cy="9.500" r="1"/><path d="M15.500 12.500v3h-3z" fill="#ced0d6" stroke="none"/></svg>
<svg class="i" style="left:297px;top:556px" viewBox="0 0 16 16"><g fill="#ced0d6" stroke="none"><circle cx="8" cy="2.500" r="1.100"/><circle cx="8" cy="8" r="1.100"/><circle cx="8" cy="13.500" r="1.100"/></g></svg>
<div class="t z" style="left:354px;top:558px">控制台</div>
<div class="a" style="left:334px;top:580px;width:93px;height:3px;background:#595b61"></div>
<div class="a" style="left:427px;top:532px;width:110px;height:50px;background:#393b40"></div>
<svg class="i" style="left:456px;top:558px;stroke:#57965c;stroke-width:1.200" viewBox="0 0 16 16"><circle cx="8" cy="8" r="6.500"/><path d="M3.500 3.500l9 9"/></svg>
<div class="t" style="left:476px;top:558px;font-size:18px">Bean</div>
<svg class="i" style="left:566px;top:558px;stroke:#c77d55;stroke-width:1.200" viewBox="0 0 16 16"><path d="M1 9h3.500L7 2l2 12 2-6h4"/></svg>
<div class="t z" style="left:585px;top:558px">运行状况</div>
<svg class="i" style="left:705px;top:558px;stroke:#57965c;stroke-width:1.200" viewBox="0 0 16 16"><circle cx="7" cy="7.500" r="6"/><path d="M3 3l8 9"/><circle cx="12" cy="12" r="3" fill="#2b2d30" stroke="#ced0d6"/><path d="M9 12h6M12 9v6" stroke="#ced0d6"/></svg>
<div class="t z" style="left:725px;top:558px">映射</div>
<svg class="i" style="left:808px;top:558px;stroke:#a77fd1;stroke-width:1.200" viewBox="0 0 16 16"><path d="M6 2c-2 0-2 1-2 3s-1 3-2 3c1 0 2 1 2 3s0 3 2 3M10 2c2 0 2 1 2 3s1 3 2 3c-1 0-2 1-2 3s0 3-2 3"/></svg>
<div class="t z" style="left:827px;top:558px">环境</div>

<div class="a" style="left:62px;top:582px;width:56px;height:744px;background:#2b2d30"></div>
<svg class="i" style="left:90px;top:611px" viewBox="0 0 16 16"><path d="M8 15V1.500M3.500 6L8 1.500 12.500 6"/></svg>
<svg class="i" style="left:90px;top:650px" viewBox="0 0 16 16"><path d="M8 1v13.500M3.500 10L8 14.500 12.500 10"/></svg>
<svg class="i" style="left:90px;top:690px" viewBox="0 0 16 16"><path d="M1 2.500h14M1 7.500h11a2.500 2.500 0 0 1 0 5H8M10 10.500l-2 2 2 2M1 12.500h3"/></svg>
<svg class="i" style="left:90px;top:727px" viewBox="0 0 16 16"><path d="M1 2.500h5M1 7h4M1 11.500h3M1 15h14M10.500 1v11.500M7.500 9.500l3 3 3-3"/></svg>
<svg class="i d" style="left:90px;top:767px;stroke:#5a5d63" viewBox="0 0 16 16"><rect x="4" y="1.500" width="8" height="4"/><rect x="1.500" y="5.500" width="13" height="6" rx="1"/><rect x="4" y="9" width="8" height="5.500"/></svg>
<svg class="i" style="left:90px;top:806px" viewBox="0 0 16 16"><path d="M2 4h12M6 4V2h4v2M3.500 4v10.500a.8.8 0 0 0 .8.8h7.400a.8.8 0 0 0 .8-.8V4M6.500 7v5.500M9.500 7v5.500"/></svg>

<div class="a" style="left:118px;top:582px;width:930px;height:728px;background:#1e1f22;overflow:hidden">
<div style="position:absolute;left:18.600px;top:-21px;width:1200px">
<div class="l">Using  y                    p         p  y  |</div>
<div class="l"><span class="c">根据</span>ID<span class="c">删除部门数据</span>: 2</div>
<div class="l">Creating a new SqlSession</div>
<div class="l">SqlSession [org.apache.ibatis.session.defaults.DefaultSqlSession@1f926eaa] was not registered</div>
<div class="l">JDBC Connection [HikariProxyConnection@39817773 wrapping com.mysql.cj.jdbc.ConnectionImpl@5a1b]</div>
<div class="l">==>  Preparing: delete from dept where id = ?</div>
<div class="l">==> Parameters: 2(Integer)</div>
<div class="l">&lt;==    Updates: 1</div>
<div class="l">Closing non transactional SqlSession [org.apache.ibatis.session.defaults.DefaultSqlSession@1f926eaa]</div>
<div class="l"><span class="c">查询全部部门数据</span></div>
<div class="l">Creating a new SqlSession</div>
<div class="l">SqlSession [org.apache.ibatis.session.defaults.DefaultSqlSession@3891efe6] was not registered</div>
<div class="l">JDBC Connection [HikariProxyConnection@394210465 wrapping com.mysql.cj.jdbc.ConnectionImpl@5a1b]</div>
<div class="l">==>  Preparing: select id, name, create_time, update_time from dept order by update_time desc</div>
<div class="l">==> Parameters: </div>
<div class="l">&lt;==    Columns: id, name, create_time, update_time</div>
<div class="l">&lt;==        Row: 3, <span class="c">咨询部</span>, 2024-09-25 09:47:40, 2024-09-30 21:26:24</div>
<div class="l">&lt;==        Row: 1, <span class="c">学工部</span>(<span class="c">王</span>), 2024-09-25 09:47:40, 2024-09-25 09:47:40</div>
<div class="l">&lt;==        Row: 4, <span class="c">就业部</span>, 2024-09-25 09:47:40, 2024-09-25 09:47:40</div>
<div class="l">&lt;==        Row: 5, <span class="c">人事部</span>, 2024-09-25 09:47:40, 2024-09-25 09:47:40</div>
<div class="l">&lt;==      Total: 4</div>
<div class="l">Closing non transactional SqlSession [org.apache.ibatis.session.defaults.DefaultSqlSession@3891efe6]</div>
</div>
</div>
<div class="dot" style="left:700px;top:685px;width:202px"></div>
<div class="dot" style="left:1012px;top:849px;width:30px"></div>
<div class="dot" style="left:700px;top:948px;width:202px"></div>
<div class="dot" style="left:1012px;top:1278px;width:30px"></div>
<div class="dot" style="left:1012px;top:585px;width:30px"></div>
<div class="rb" style="left:355px;top:1119px;width:115px;height:35px"></div>
<div class="a" style="left:137px;top:1310px;width:910px;height:13px;background:#474849"></div>

<!-- status bar -->
<div class="a" style="left:0;top:1325px;width:2560px;height:40px;background:#2b2d30;border-top:1px solid #1e1f22;box-sizing:border-box"></div>
<div class="t" style="left:22px;top:1347px;color:#9da0a8">Database</div>
<svg class="i s" style="left:119px;top:1347px;stroke:#9da0a8"><use href="#cr"/></svg>
<div class="t" style="left:139px;top:1347px;color:#9da0a8;letter-spacing:-.7px">@47.93.33.34</div>
<svg class="i s" style="left:275px;top:1347px;stroke:#9da0a8"><use href="#cr"/></svg>
<div class="t" style="left:295px;top:1347px;color:#9da0a8">tlias</div>
<svg class="i s" style="left:347px;top:1347px;stroke:#9da0a8"><use href="#cr"/></svg>
<div class="t z" style="left:365px;top:1347px;color:#9da0a8">表</div>
<svg class="i s" style="left:401px;top:1347px;stroke:#9da0a8"><use href="#cr"/></svg>
<svg class="i" style="left:432px;top:1347px;width:24px;height:24px;stroke:#ced0d6"><use href="#tb"/></svg>
<div class="t" style="left:450px;top:1347px;color:#9da0a8">dept</div>

<!-- browser window -->
<div class="a" style="left:1040px;top:446px;width:1462px;height:919px;background:#f7f7f7;box-shadow:0 0 7px 2px #1b4a85;border-radius:0 0 12px 0"></div>
<svg class="i k" style="left:1061px;top:469px" viewBox="0 0 16 16"><path d="M14.500 8H2M7.500 2.500L2 8l5.500 5.500"/></svg>
<svg class="i k" style="left:1104px;top:469px" viewBox="0 0 16 16"><path d="M12 3.500A6 6 0 1 0 14 8M12.500 .5v3.500H9"/></svg>
<svg class="i k" style="left:1147px;top:469px" viewBox="0 0 16 16"><path d="M2 7.500L8 2l6 5.500V13a1.500 1.500 0 0 1-1.500 1.500H10.500V10a2.500 2.500 0 0 0-5 0v4.500h-2A1.500 1.500 0 0 1 2 13z"/></svg>
<div class="a" style="left:1177px;top:450px;width:1011px;height:38px;box-sizing:border-box;background:#fff;border:1px solid #d4d4d4;border-radius:19px;box-shadow:0 1px 1px #ddd"></div>
<svg class="i k" style="left:1195px;top:469px;width:22px;height:22px" viewBox="0 0 16 16"><circle cx="8" cy="8" r="6.500"/><path d="M8 7v4.500M8 4.500v1"/></svg>
<div class="t" style="left:1217px;top:470px;font-size:17px;color:#3a3a3a">localhost:90/dept</div>
<svg class="i k" style="left:2167px;top:469px;width:22px;height:22px" viewBox="0 0 16 16"><path d="M8 1.500l2 4.300 4.700.6-3.400 3.300.9 4.700L8 12.100l-4.200 2.300.9-4.700L1.300 6.400 6 5.800z"/></svg>
<svg class="i k" style="left:2219px;top:469px" viewBox="0 0 16 16"><circle cx="4" cy="12.500" r="2"/><path d="M6 12.500V3l7-1.500v5"/><circle cx="11" cy="11.500" r="3.500" fill="#222" stroke="none"/><path d="M10 9.800l2.500 1.700L10 13.200z" fill="#fff" stroke="none"/></svg>
<svg class="i k" style="left:2261px;top:469px" viewBox="0 0 16 16"><path d="M9.500 12.500L4 15l1-6L1 5.200 6.500 4.500 9 0l2 4h3M10 7h5M10 10h5M10 13h5"/></svg>
<svg class="i k" style="left:2304px;top:469px" viewBox="0 0 16 16"><path d="M2.500 3.500A6.500 6.500 0 1 1 1.500 8M2 1v3h3M8 4v4.500l2.500 1.500"/></svg>
<svg class="i k" style="left:2348px;top:469px" viewBox="0 0 16 16"><path d="M8 1v11M3.500 7.500L8 12l4.500-4.500M2.500 15h11"/></svg>
<div class="a" style="left:2377px;top:456px;width:27px;height:27px;border-radius:50%;background:#dcdcdc;overflow:hidden"><div class="a" style="left:8px;top:5px;width:11px;height:11px;border-radius:50%;background:#9a9a9a"></div><div class="a" style="left:4px;top:18px;width:19px;height:14px;border-radius:50%;background:#9a9a9a"></div></div>
<div class="a" style="left:2398px;top:456px;width:7px;height:7px;border-radius:50%;background:#e60012"></div>
<svg class="i" style="left:2434px;top:469px;width:20px;height:20px" viewBox="0 0 16 16"><g fill="#333" stroke="none"><circle cx="2.500" cy="8" r="1.100"/><circle cx="8" cy="8" r="1.100"/><circle cx="13.500" cy="8" r="1.100"/></g></svg>
<svg class="a" style="left:2466px;top:456px;width:28px;height:28px" viewBox="0 0 16 16"><defs><linearGradient id="cp1" x1="0" y1="0" x2="1" y2="1"><stop offset="0" stop-color="#1fa4e8"/><stop offset=".5" stop-color="#3ec46a"/><stop offset="1" stop-color="#f2c230"/></linearGradient><linearGradient id="cp2" x1="0" y1="0" x2="1" y2="1"><stop offset="0" stop-color="#2e62ef"/><stop offset=".5" stop-color="#b45be0"/><stop offset="1" stop-color="#f47a52"/></linearGradient></defs><path d="M4.500 1.500h4L5 13c-.4 1-1 1.500-2 1.500h-1C.8 14.500 0 13.500.4 12z" fill="url(#cp1)"/><path d="M7.500 14.500h4c1.200 0 2-.5 2.400-1.500L16 5c.3-1-.4-2-1.500-2h-3z" fill="url(#cp2)"/><path d="M6 1.500h5.500L9 9H6.500z" fill="#3a7ff0"/></svg>

<svg class="i k" style="left:1058px;top:510px;width:24px;height:24px" viewBox="0 0 16 16"><rect x="1.500" y="4" width="11.500" height="8" rx="2"/><path d="M4 8h7" stroke-width="1.500"/><path d="M14.500 6v5"/></svg>
<div class="a" style="left:1083px;top:500px;width:1px;height:20px;background:#d6d6d6"></div>
<svg class="i k" style="left:1106px;top:510px;width:24px;height:24px" viewBox="0 0 16 16"><path d="M6 14H3a1 1 0 0 1-1-1V3a1 1 0 0 1 1-1h2.500L7 3.500h6a1 1 0 0 1 1 1V8M8 12.500h6M10 10.500l-2 2 2 2M12 10.500l2 2-2 2"/></svg>
<div class="t" style="left:1123px;top:511px;font-size:15px;color:#444">导入收藏夹</div>
<div class="a" style="left:1213px;top:500px;width:1px;height:20px;background:#d6d6d6"></div>
<svg class="a" style="left:1231px;top:499px;width:18px;height:22px;fill:none;stroke-width:3" viewBox="0 0 18 22"><path d="M9 2c4 0 6 2 6 5s-2 5-6 5" stroke="#f0a030"/><path d="M4 7h10" stroke="#30b0e0"/><path d="M8 12c-3 1-4 3-4 8" stroke="#b060e0"/></svg>
<div class="t" style="left:1258px;top:511px;font-size:15px;color:#444">保利避风港</div>
<div class="a" style="left:1350px;top:502px;width:16px;height:17px;border-radius:50%;background:radial-gradient(circle at 35% 35%,#4d7cd8,#0b3d8f)"></div>
<div class="t" style="left:1375px;top:511px;font-size:15px;color:#444;letter-spacing:-.2px">ambientCG - Free T...</div>
<div class="ava" style="left:1534px;top:500px"></div>
<div class="t" style="left:1560px;top:511px;font-size:15px;color:#444;letter-spacing:-.3px">22级数媒技本科班...</div>
<div class="ava" style="left:1719px;top:500px"></div>
<div class="t" style="left:1745px;top:511px;font-size:15px;color:#444;letter-spacing:-.3px">22级数媒技本科班...</div>

<!-- dimmed web page -->
<div class="a" style="left:1041px;top:529px;width:1461px;height:836px;background:#808080;border-radius:12px 12px 12px 0"></div>
<div class="a" style="left:1041px;top:529px;width:1442px;height:72px;border-radius:12px 0 0 0;background:linear-gradient(90deg,#02384f 0,#00504f 33%,#00663a 75%,#537a03 100%)"></div>
<div class="t b" style="left:1067px;top:566px;font-size:40px;letter-spacing:7px;color:#8a8a8a">Tlias智能学习辅助系统</div>
<svg class="i" style="left:2326px;top:564px;stroke:#8a8f7a" viewBox="0 0 16 16"><path d="M5 3.500a6 6 0 1 0 6 0M8 1v6"/></svg>
<div class="t" style="left:2340px;top:566px;font-size:19px;color:#8f9184">退出登录</div>
<div class="t" style="left:2430px;top:566px;font-size:19px;color:#8f9184;font-weight:700">【】</div>
<div class="a" style="left:1305px;top:601px;width:1px;height:764px;background:#6f6f6f"></div>
<svg class="a" style="left:1071px;top:627px;width:18px;height:18px" viewBox="0 0 18 18"><path d="M17 0L0 8l5 3 8-7-6 8v6l3-4 3 2z" fill="#303030"/></svg>
<div class="t w" style="left:1100px;top:636px;color:#333">首页</div>
<div class="a" style="left:1072px;top:695px;width:7px;height:7px;background:#303030"></div><div class="a" style="left:1082px;top:695px;width:7px;height:7px;background:#303030"></div><div class="a" style="left:1072px;top:705px;width:7px;height:7px;background:#303030"></div><div class="a" style="left:1082px;top:705px;width:7px;height:7px;background:#303030"></div>
<div class="t w" style="left:1100px;top:703px;color:#333">班级学员管理</div>
<svg class="i s" style="left:1273px;top:702px;stroke:#444"><use href="#cd"/></svg>
<svg class="i" style="left:1080px;top:770px;width:20px;height:20px;stroke:#303030;stroke-width:3" viewBox="0 0 16 16"><circle cx="8" cy="8" r="4.500"/><path d="M8 0v2.500M8 13.500V16M0 8h2.500M13.500 8H16M2.300 2.300l1.800 1.800M11.900 11.900l1.800 1.800M13.700 2.300l-1.800 1.800M4.100 11.900l-1.800 1.800"/></svg>
<div class="t w" style="left:1100px;top:770px;color:#333">系统信息管理</div>
<svg class="i s" style="left:1273px;top:769px;stroke:#444"><use href="#cd"/></svg>
<div class="a" style="left:1072px;top:834px;width:4px;height:11px;background:#303030"></div><div class="a" style="left:1078px;top:827px;width:4px;height:18px;background:#303030"></div><div class="a" style="left:1084px;top:830px;width:4px;height:15px;background:#303030"></div>
<div class="t w" style="left:1100px;top:837px;color:#333">数据统计管理</div>
<svg class="i s" style="left:1273px;top:836px;stroke:#444"><use href="#cd"/></svg>
<div class="t b" style="left:1331px;top:644px;font-size:22px;color:#111">部门管理</div>
<div class="a" style="left:2340px;top:658px;width:120px;height:39px;background:#205184;border-radius:4px;color:#8a9cb0;font-size:17px;line-height:39px;text-align:center;font-weight:500">+ 新增部门</div>

<div class="a" style="left:1330px;top:714px;width:1129px;height:300px;box-sizing:border-box;border:1px solid #737680"></div>
<div class="hl" style="left:1330px;top:761px;width:1129px;height:1px;background:#747474"></div>
<div class="hl" style="left:1330px;top:813px;width:1129px;height:1px;background:#747474"></div>
<div class="hl" style="left:1330px;top:863px;width:1129px;height:1px;background:#747474"></div>
<div class="hl" style="left:1330px;top:913px;width:1129px;height:1px;background:#747474"></div>
<div class="hl" style="left:1330px;top:964px;width:1129px;height:1px;background:#747474"></div>
<div class="vl" style="left:1450px;top:714px;height:300px;background:#747474"></div>
<div class="vl" style="left:1809px;top:714px;height:300px;background:#747474"></div>
<div class="vl" style="left:2169px;top:714px;height:300px;background:#747474"></div>
<div class="t wh ct" style="left:1390px;top:738px">序号</div><div class="t wh ct" style="left:1630px;top:738px">部门名称</div><div class="t wh ct" style="left:1989px;top:738px">最后修改时间</div><div class="t wh ct" style="left:2314px;top:738px">操作</div>
<div class="t w ct" style="left:1390px;top:787px">1</div><div class="t w ct" style="left:1630px;top:787px">咨询部</div><div class="t w ct" style="left:1989px;top:787px">2024-09-30T21:26:24</div>
<div class="bt1" style="top:787px">修改</div><div class="bt2" style="top:787px">删除</div>
<div class="t w ct" style="left:1390px;top:838px">2</div><div class="t w ct" style="left:1630px;top:838px">学工部(王)</div><div class="t w ct" style="left:1989px;top:838px">2024-09-25T09:47:40</div>
<div class="bt1" style="top:838px">修改</div><div class="bt2" style="top:838px">删除</div>
<div class="t w ct" style="left:1390px;top:888px">3</div><div class="t w ct" style="left:1630px;top:888px">就业部</div><div class="t w ct" style="left:1989px;top:888px">2024-09-25T09:47:40</div>
<div class="bt1" style="top:888px">修改</div><div class="bt2" style="top:888px">删除</div>
<div class="t w ct" style="left:1390px;top:939px">4</div><div class="t w ct" style="left:1630px;top:939px">人事部</div><div class="t w ct" style="left:1989px;top:939px">2024-09-25T09:47:40</div>
<div class="bt1" style="top:939px">修改</div><div class="bt2" style="top:939px">删除</div>
<div class="t w ct" style="left:1390px;top:990px">5</div><div class="t w ct" style="left:1630px;top:990px">教研部</div><div class="t w ct" style="left:1989px;top:990px">2024-09-25T11:17:04</div>
<div class="bt1" style="top:990px">修改</div><div class="bt2" style="top:990px">删除</div>
<div class="rb" style="left:1585px;top:815px;width:92px;height:45px"></div>
<div class="rb" style="left:2320px;top:970px;width:56px;height:43px"></div>

<!-- dialog -->
<div class="a" style="left:1519px;top:867px;width:504px;height:162px;background:#fff;border-radius:6px;box-shadow:0 1px 4px rgba(0,0,0,.15)"></div>
<div class="t" style="left:1538px;top:898px;font-size:21px;color:#303133">提示</div>
<svg class="i s" style="left:1996px;top:895px;stroke:#909399" viewBox="0 0 16 16"><path d="M2 2l12 12M14 2L2 14"/></svg>
<div class="a" style="left:1540px;top:932px;width:26px;height:26px;border-radius:50%;background:#e6a23c"></div>
<div class="a" style="left:1552px;top:937px;width:2px;height:11px;background:#fff"></div><div class="a" style="left:1552px;top:950px;width:2px;height:3px;background:#fff"></div>
<div class="t" style="left:1582px;top:947.500px;font-size:17px;color:#606266;letter-spacing:-.25px">此操作将永久删除该部门, 是否继续?</div>
<div class="a" style="left:1851px;top:978px;width:71px;height:39px;box-sizing:border-box;border:1px solid #dcdfe6;border-radius:4px;background:#fff;color:#606266;font-size:17px;line-height:37px;text-align:center">取消</div>
<div class="a" style="left:1934px;top:978px;width:71px;height:39px;border-radius:4px;background:#409eff;color:#fff;font-size:17px;line-height:39px;text-align:center">确定</div>

<!-- arrow -->
<svg class="a" style="left:2025px;top:975px;width:295px;height:32px" viewBox="0 0 295 32"><path d="M6 17L28 7l-3 8 261 2.500v6.500L25 22l3 8z" fill="#ed1c24"/></svg>
</body></html>
